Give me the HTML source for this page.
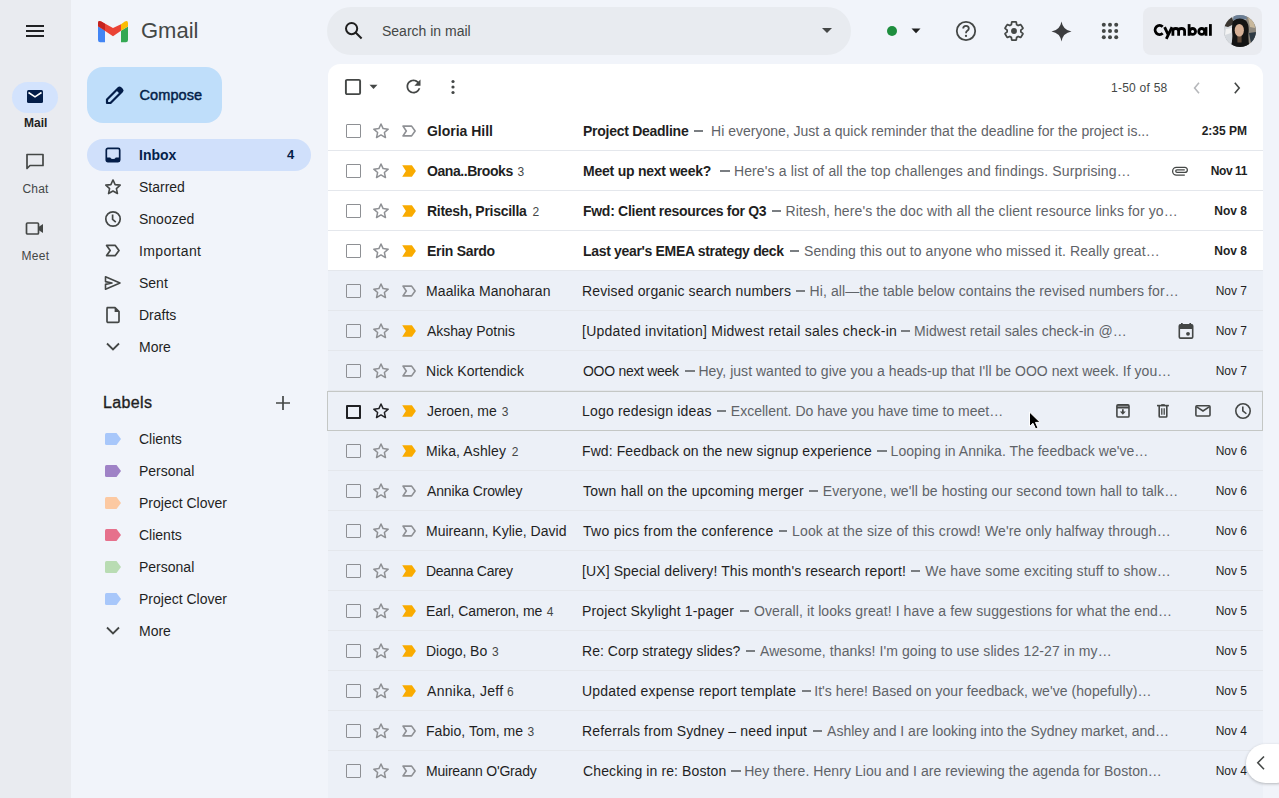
<!DOCTYPE html>
<html><head><meta charset="utf-8">
<style>
*{box-sizing:border-box;margin:0;padding:0}
html,body{width:1279px;height:798px;overflow:hidden;background:#f1f4fa;font-family:"Liberation Sans",sans-serif;color:#1f1f1f}
.abs{position:absolute}
#rail{left:0;top:0;width:71px;height:798px;background:#e9ebf0}
.ico{position:absolute;display:block}
.t{position:absolute;white-space:nowrap}
#search{left:327px;top:7px;width:524px;height:48px;border-radius:24px;background:#e8ebf0}
#panel{left:328px;top:64px;width:935px;height:734px;background:linear-gradient(#fff 0,#fff 207px,#ecf0f7 207px);border-radius:12px 12px 0 0}
.row{position:absolute;left:0;width:935px;height:40px;border-bottom:1px solid #e4e7ec}
.row.read{background:#ecf0f7}
.row .cb{position:absolute;left:18px;top:12.5px;width:14.6px;height:14.6px;border:1.8px solid #8e9094;border-radius:1px}
.row .star{position:absolute;left:44.2px;top:10.8px}
.row .imp{position:absolute;left:74px;top:14px}
.d{display:inline-block;width:23.4px;height:1.4px;background:linear-gradient(#5f6368,#5f6368) center/9.5px 100% no-repeat;vertical-align:4px}
.row .snd{position:absolute;top:12px;font-size:14px;line-height:16px;white-space:nowrap;color:#1f1f1f}
.row .sub{position:absolute;top:12px;font-size:14px;line-height:16px;white-space:nowrap;color:#1f1f1f}
.row .sub.b{font-weight:bold}
.row .snip{position:absolute;top:12px;font-size:14px;line-height:16px;white-space:nowrap;color:#5f6368}
.row .dash{position:absolute;top:19px;height:2px;background:#7a7e82}
.row .cnt{position:absolute;top:13px;font-size:12px;line-height:16px;color:#444746}
.row .dt{position:absolute;right:16px;top:12px;font-size:12px;line-height:16px;white-space:nowrap;color:#1f1f1f}
.unread .snd,.unread .dt{font-weight:bold;color:#1f1f1f}
.row.hov{border:1px solid #c4c7c5;z-index:2;left:-1px;width:936px;top:0}
.row.hov .cb{border:2px solid #202124;border-radius:1px}
.row.hov > .ico,.row.hov > .snd,.row.hov > .sub,.row.hov > .snip,.row.hov > .dash,.row.hov > .cnt,.row.hov > .star,.row.hov > .imp{margin-top:-1px}
.row .ico{position:absolute}
.nav{position:absolute;left:139px;font-size:14px;line-height:16px;color:#1f1f1f;white-space:nowrap}
.lab{position:absolute;left:139px;font-size:14px;line-height:16px;color:#1f1f1f;white-space:nowrap}
.tag{position:absolute;left:105px;width:16px;height:12px}
</style></head><body>
<div id="rail" class="abs"></div>
<!-- hamburger -->
<svg class="ico" style="left:26px;top:25px" width="18" height="12" viewBox="0 0 18 12"><rect x="0" y="0" width="18" height="2" fill="#202124"/><rect x="0" y="5" width="18" height="2" fill="#202124"/><rect x="0" y="10" width="18" height="2" fill="#202124"/></svg>
<!-- Mail pill -->
<div class="abs" style="left:12px;top:82px;width:46px;height:31px;border-radius:16px;background:#d3e3fd"></div>
<svg class="ico" style="left:26px;top:89px" width="18" height="15" viewBox="0 0 18 15"><rect x="1" y="1" width="16" height="13" rx="1.5" fill="#041e49"/><path d="M2.5 3.5 L9 7.8 L15.5 3.5" stroke="#fff" stroke-width="1.6" fill="none"/></svg>
<div class="t" style="left:24px;top:116px;font-size:12px;font-weight:bold;color:#1f1f1f">Mail</div>
<svg class="ico" style="left:25px;top:152px" width="20" height="20" viewBox="0 0 20 20"><path d="M2 2.5h16v11H5l-3 3z" stroke="#444746" stroke-width="1.7" fill="none" stroke-linejoin="round"/></svg>
<div class="t" style="left:22.5px;top:182px;font-size:12px;letter-spacing:0.2px;color:#444746">Chat</div>
<svg class="ico" style="left:25px;top:220px" width="20" height="18" viewBox="0 0 20 18"><rect x="1.5" y="3" width="12" height="11" rx="1" stroke="#444746" stroke-width="1.7" fill="none"/><path d="M13.5 7 L18 4 V13 L13.5 10z" fill="#444746"/></svg>
<div class="t" style="left:21.5px;top:248.5px;font-size:12px;letter-spacing:0.3px;color:#444746">Meet</div>

<!-- Gmail logo -->
<svg class="ico" style="left:98px;top:19.7px" width="30" height="23" viewBox="0 0 30 23">
<path d="M0 6.2 L7 10.3 V22.2 H2.2 Q0 22.2 0 20z" fill="#4285f4"/>
<path d="M23 10.7 L30 6.6 V20 Q30 22.2 27.8 22.2 H23z" fill="#34a853"/>
<path d="M23 4.2 L26.8 1.6 Q30 -0.2 30 3.5 V6.6 L23 10.7z" fill="#fbbc04"/>
<path d="M0 3.5 Q0 -0.2 3.2 1.6 L15 8.1 L23 4.2 V10.7 L15 16.2 L0 6.2z" fill="#ea4335"/>
<path d="M0 3.5 Q0 -0.2 3.2 1.6 L7 3.8 V10.3 L0 6.2z" fill="#c5221f"/>
</svg>
<div class="t" style="left:141px;top:18px;font-size:22px;line-height:26px;color:#444746">Gmail</div>

<!-- Compose -->
<div class="abs" style="left:87px;top:67px;width:135px;height:56px;border-radius:16px;background:#bfdefa"></div>
<svg class="ico" style="left:104px;top:85px" width="21" height="21" viewBox="0 0 21 21"><path d="M3 18 V14.5 L14.5 3 Q15.5 2 16.5 3 L18 4.5 Q19 5.5 18 6.5 L6.5 18z" stroke="#041e49" stroke-width="2.2" fill="none" stroke-linejoin="round"/><path d="M12.2 5.3 L14.5 3 Q15.5 2 16.5 3 L18 4.5 Q19 5.5 18 6.5 L15.7 8.8z" fill="#041e49"/></svg>
<div class="t" style="left:139.5px;top:87px;font-size:14.5px;line-height:16px;letter-spacing:0.1px;-webkit-text-stroke:0.45px #041e49;color:#041e49">Compose</div>

<!-- Nav -->
<div class="abs" style="left:87px;top:139px;width:224px;height:32px;border-radius:16px;background:#d0e0fb"></div>
<svg class="ico" style="left:105px;top:147px" width="16" height="16" viewBox="0 0 16 16"><rect x="1.3" y="1.3" width="13.4" height="13.4" rx="1.6" fill="none" stroke="#041e49" stroke-width="1.7"/><path d="M1.3 10.6 H5.2 Q6 12.1 8 12.1 Q10 12.1 10.8 10.6 H14.7 V13.2 Q14.7 14.7 13.2 14.7 H2.8 Q1.3 14.7 1.3 13.2z" fill="#041e49"/></svg>
<div class="nav" style="top:147px;font-weight:bold;color:#041e49">Inbox</div>
<div class="nav" style="top:147px;left:287px;font-weight:bold;color:#041e49;font-size:13px">4</div>

<svg class="ico" style="left:104px;top:178px" width="18" height="18" viewBox="0 0 24 24"><path d="M12 2.6l2.83 6.2 6.77.72-5.06 4.56 1.42 6.66L12 17.3l-5.96 3.44 1.42-6.66L2.4 9.52l6.77-.72z" fill="none" stroke="#444746" stroke-width="2.1" stroke-linejoin="round"/></svg>
<div class="nav" style="top:179px">Starred</div>
<svg class="ico" style="left:104px;top:210px" width="18" height="18" viewBox="0 0 18 18"><circle cx="9" cy="9" r="7.2" fill="none" stroke="#444746" stroke-width="1.7"/><path d="M8.6 4.6 V9.4 L11.8 12.2" fill="none" stroke="#444746" stroke-width="1.7"/></svg>
<div class="nav" style="top:211px">Snoozed</div>
<svg class="ico" style="left:105px;top:244px" width="16" height="13" viewBox="0 0 16 13"><path d="M1.6 1.4H10.3L14 6.5 10.3 11.6H1.6L5.2 6.5z" fill="none" stroke="#444746" stroke-width="1.7" stroke-linejoin="round"/></svg>
<div class="nav" style="top:243px;letter-spacing:0.35px">Important</div>
<svg class="ico" style="left:104px;top:275px" width="18" height="16" viewBox="0 0 18 16"><path d="M1.5 1.8 L16 8 L1.5 14.2 L1.5 9.4 L8 8 L1.5 6.6z" fill="none" stroke="#444746" stroke-width="1.6" stroke-linejoin="round"/></svg>
<div class="nav" style="top:275px">Sent</div>
<svg class="ico" style="left:105px;top:306px" width="16" height="18" viewBox="0 0 16 18"><path d="M2.2 1.6 H10 L14 5.6 V15.2 Q14 16.4 12.8 16.4 H3.2 Q2 16.4 2 15.2 V2.8 Q2 1.6 3.2 1.6z" fill="none" stroke="#444746" stroke-width="1.7" stroke-linejoin="round"/><path d="M9.6 1.6 L14 6 H9.6z" fill="#444746"/></svg>
<div class="nav" style="top:307px">Drafts</div>
<svg class="ico" style="left:105px;top:341px" width="16" height="12" viewBox="0 0 16 12"><path d="M2 2.5 L8 8.5 L14 2.5" fill="none" stroke="#444746" stroke-width="1.8"/></svg>
<div class="nav" style="top:339px">More</div>

<div class="t" style="left:103px;top:394px;font-size:16px;line-height:18px;letter-spacing:0.35px;-webkit-text-stroke:0.35px #1f1f1f;color:#1f1f1f">Labels</div>
<svg class="ico" style="left:276px;top:396px" width="14" height="14" viewBox="0 0 14 14"><path d="M7 0 V14 M0 7 H14" stroke="#444746" stroke-width="1.7"/></svg>
<svg class="tag" style="top:433px" viewBox="0 0 16 12"><path d="M1.5 0H11.5L16 6 11.5 12H1.5Q0 12 0 10.5V1.5Q0 0 1.5 0z" fill="#a8c7fa"/></svg>
<div class="lab" style="top:431px">Clients</div>
<svg class="tag" style="top:465px" viewBox="0 0 16 12"><path d="M1.5 0H11.5L16 6 11.5 12H1.5Q0 12 0 10.5V1.5Q0 0 1.5 0z" fill="#9f82c6"/></svg>
<div class="lab" style="top:463px">Personal</div>
<svg class="tag" style="top:497px" viewBox="0 0 16 12"><path d="M1.5 0H11.5L16 6 11.5 12H1.5Q0 12 0 10.5V1.5Q0 0 1.5 0z" fill="#fcc9a2"/></svg>
<div class="lab" style="top:495px">Project Clover</div>
<svg class="tag" style="top:529px" viewBox="0 0 16 12"><path d="M1.5 0H11.5L16 6 11.5 12H1.5Q0 12 0 10.5V1.5Q0 0 1.5 0z" fill="#e6718c"/></svg>
<div class="lab" style="top:527px">Clients</div>
<svg class="tag" style="top:561px" viewBox="0 0 16 12"><path d="M1.5 0H11.5L16 6 11.5 12H1.5Q0 12 0 10.5V1.5Q0 0 1.5 0z" fill="#b9dcb3"/></svg>
<div class="lab" style="top:559px">Personal</div>
<svg class="tag" style="top:593px" viewBox="0 0 16 12"><path d="M1.5 0H11.5L16 6 11.5 12H1.5Q0 12 0 10.5V1.5Q0 0 1.5 0z" fill="#a8c7fa"/></svg>
<div class="lab" style="top:591px">Project Clover</div>
<svg class="ico" style="left:105px;top:625px" width="16" height="12" viewBox="0 0 16 12"><path d="M2 2.5 L8 8.5 L14 2.5" fill="none" stroke="#444746" stroke-width="1.8"/></svg>
<div class="lab" style="top:623px">More</div>

<!-- search -->
<div id="search" class="abs"></div>
<svg class="ico" style="left:343px;top:20px" width="22" height="22" viewBox="0 0 22 22"><circle cx="8.6" cy="8.6" r="5.6" fill="none" stroke="#1f1f1f" stroke-width="2"/><path d="M12.6 12.6 L18.6 18.6" stroke="#1f1f1f" stroke-width="2.1"/></svg>
<div class="t" style="left:382px;top:23px;font-size:14px;line-height:16px;color:#444746">Search in mail</div>
<svg class="ico" style="left:821px;top:27px" width="12" height="7" viewBox="0 0 12 7"><path d="M1 1 H11 L6 6z" fill="#444746"/></svg>

<!-- header right -->
<div class="abs" style="left:887px;top:26px;width:10px;height:10px;border-radius:5px;background:#1e8e3e"></div>
<svg class="ico" style="left:911px;top:28px" width="10" height="6" viewBox="0 0 10 6"><path d="M0.5 0.5 H9.5 L5 5.2z" fill="#1f1f1f"/></svg>
<svg class="ico" style="left:955px;top:20px" width="22" height="22" viewBox="0 0 22 22"><circle cx="11" cy="11" r="9.2" fill="none" stroke="#444746" stroke-width="1.8"/><path d="M8.2 8.6 Q8.2 5.8 11 5.8 Q13.8 5.8 13.8 8.4 Q13.8 9.8 12.3 10.7 Q11 11.5 11 13.2" fill="none" stroke="#444746" stroke-width="1.8"/><circle cx="11" cy="15.9" r="1.15" fill="#444746"/></svg>
<svg class="ico" style="left:1003px;top:20px" width="22" height="22" viewBox="0 0 24 24"><path d="M19.43 12.98c.04-.32.07-.64.07-.98s-.03-.66-.07-.98l2.11-1.65c.19-.15.24-.42.12-.64l-2-3.46c-.12-.22-.39-.3-.61-.22l-2.49 1c-.52-.4-1.08-.73-1.69-.98l-.38-2.65C14.46 2.18 14.25 2 14 2h-4c-.25 0-.46.18-.49.42l-.38 2.65c-.61.25-1.17.59-1.69.98l-2.49-1c-.23-.09-.49 0-.61.22l-2 3.46c-.13.22-.07.49.12.64l2.11 1.65c-.04.32-.07.65-.07.98s.03.66.07.98l-2.11 1.65c-.19.15-.24.42-.12.64l2 3.46c.12.22.39.3.61.22l2.49-1c.52.4 1.08.73 1.69.98l.38 2.65c.03.24.24.42.49.42h4c.25 0 .46-.18.49-.42l.38-2.65c.61-.25 1.17-.59 1.69-.98l2.49 1c.23.09.49 0 .61-.22l2-3.46c.12-.22.07-.49-.12-.64l-2.11-1.65z" fill="none" stroke="#444746" stroke-width="1.9" stroke-linejoin="round"/><circle cx="12" cy="12" r="3.2" fill="#444746"/></svg>
<svg class="ico" style="left:1051px;top:21px" width="21" height="21" viewBox="0 0 21 21"><path d="M10.5 0.5 Q11.9 9.1 20.5 10.5 Q11.9 11.9 10.5 20.5 Q9.1 11.9 0.5 10.5 Q9.1 9.1 10.5 0.5z" fill="#3c3d3f"/></svg>
<svg class="ico" style="left:1101px;top:22px" width="18" height="18" viewBox="0 0 18 18" fill="#444746"><circle cx="2.8" cy="2.8" r="2"/><circle cx="9" cy="2.8" r="2"/><circle cx="15.2" cy="2.8" r="2"/><circle cx="2.8" cy="9" r="2"/><circle cx="9" cy="9" r="2"/><circle cx="15.2" cy="9" r="2"/><circle cx="2.8" cy="15.2" r="2"/><circle cx="9" cy="15.2" r="2"/><circle cx="15.2" cy="15.2" r="2"/></svg>
<div class="abs" style="left:1143px;top:7px;width:119px;height:48px;border-radius:8px;background:#e9ebf0"></div>
<svg class="ico" style="left:1150px;top:18px" width="65" height="24" viewBox="0 0 65 24"><g fill="none" stroke="#000" stroke-width="2.8">
<path d="M12.7 8.7 A4.5 4.5 0 1 0 12.7 15.3" stroke-width="2.9"/>
<path d="M14.6 9.1 L18.4 17.2 M22 9.1 L16.3 20.8"/>
<path d="M22.9 17.8 V13 Q22.9 10.5 25.75 10.5 Q28.6 10.5 28.6 13 V17.8 M28.6 13 Q28.6 10.5 31.6 10.5 Q34.6 10.5 34.6 13 V17.8"/>
<path d="M39.1 6.1 V17.8"/><circle cx="42.6" cy="13.45" r="2.95"/>
<circle cx="51.7" cy="13.45" r="2.95"/><path d="M56 9.1 V17.8"/>
<path d="M60.4 6.1 V17.8"/>
</g></svg>
<svg class="ico" style="left:1223.5px;top:15px" width="32" height="32" viewBox="0 0 32 32"><defs><clipPath id="av"><circle cx="16" cy="16" r="16"/></clipPath></defs><g clip-path="url(#av)">
<rect width="32" height="32" fill="#a9abad"/>
<rect x="0" y="0" width="9" height="32" fill="#d5d9de"/>
<path d="M0 4 L8 2 L10 9 L4 12 L0 11z" fill="#3a3530"/>
<path d="M2 14 L8 13 L7 18 L1 20z" fill="#f2f2f2"/>
<rect x="22" y="0" width="10" height="32" fill="#8e887e"/>
<path d="M24 2 L30 6 L31 13 L26 12z" fill="#c8b89c"/>
<path d="M25 18 L32 17 L32 26 L27 28z" fill="#2e3a44"/>
<path d="M10 0 L22 0 L23 4 L9 5z" fill="#6b7e95"/>
<path d="M9 6 Q15.5 1.5 22 5.5 Q25.5 10 24.5 18 Q24 26 26 34 L6 34 Q9 26 8.2 18 Q7.5 10 9 6z" fill="#141414"/>
<rect x="13.4" y="20.5" width="4.2" height="7" fill="#5e4838"/>
<ellipse cx="15.3" cy="15.2" rx="4.6" ry="6.3" fill="#d6b096"/>
<path d="M10.6 10.5 Q15 6 20.2 10 L20.4 7.5 Q15 3.5 10.2 8z" fill="#141414"/>
</g></svg>

<!-- panel -->
<div id="panel" class="abs">
<svg class="ico" style="left:16px;top:14px" width="18" height="18" viewBox="0 0 18 18"><rect x="1.9" y="1.9" width="14.2" height="14.2" rx="1.2" fill="none" stroke="#444746" stroke-width="1.9"/></svg>
<svg class="ico" style="left:41px;top:20px" width="9" height="6" viewBox="0 0 9 6"><path d="M0.5 0.8 H8.5 L4.5 4.9z" fill="#444746"/></svg>
<svg class="ico" style="left:74.5px;top:12.3px" width="21" height="21" viewBox="0 0 24 24"><path d="M17.65 6.35C16.2 4.9 14.21 4 12 4c-4.42 0-7.99 3.58-7.99 8s3.57 8 7.99 8c3.73 0 6.84-2.55 7.73-6h-2.08c-.82 2.33-3.04 4-5.65 4-3.31 0-6-2.69-6-6s2.69-6 6-6c1.66 0 3.14.69 4.22 1.78L13 11h7V4l-2.35 2.35z" fill="#444746"/></svg>
<svg class="ico" style="left:122px;top:15px" width="6" height="16" viewBox="0 0 6 16" fill="#444746"><circle cx="3" cy="2.5" r="1.6"/><circle cx="3" cy="8" r="1.6"/><circle cx="3" cy="13.5" r="1.6"/></svg>
<div class="t" style="left:783px;top:16.5px;font-size:12px;line-height:14px;letter-spacing:0.25px;color:#444746">1-50 of 58</div>
<svg class="ico" style="left:864px;top:17px" width="10" height="14" viewBox="0 0 10 14"><path d="M7 1.8 L2.6 7 L7 12.2" fill="none" stroke="#b6b8bb" stroke-width="1.6"/></svg>
<svg class="ico" style="left:905px;top:17px" width="10" height="14" viewBox="0 0 10 14"><path d="M1.8 1.8 L6.2 7 L1.8 12.2" fill="none" stroke="#444746" stroke-width="1.6"/></svg>
<div class="row unread" style="top:47px"><div class="cb"></div><svg class="star" width="18" height="18" viewBox="0 0 24 24"><path d="M12 2.6l2.83 6.2 6.77.72-5.06 4.56 1.42 6.66L12 17.3l-5.96 3.44 1.42-6.66L2.4 9.52l6.77-.72z" fill="none" stroke="#8e9094" stroke-width="2" stroke-linejoin="round"/></svg><svg class="imp" width="14" height="12" viewBox="0 0 14 12"><path d="M1 1.1H9.6L13.1 6 9.6 10.9H1L4.3 6z" fill="none" stroke="#8e9094" stroke-width="1.6" stroke-linejoin="round"/></svg><div class="snd" style="left:99.00px;letter-spacing:-0.023px">Gloria Hill</div><div class="sub b" style="left:255.00px;letter-spacing:-0.268px">Project Deadline</div><div class="dash" style="left:365.90px;width:9.40px"></div><div class="snip" style="left:383.10px;letter-spacing:-0.002px">Hi everyone, Just a quick reminder that the deadline for the project is...</div><div class="dt">2:35 PM</div></div>
<div class="row unread" style="top:87px"><div class="cb"></div><svg class="star" width="18" height="18" viewBox="0 0 24 24"><path d="M12 2.6l2.83 6.2 6.77.72-5.06 4.56 1.42 6.66L12 17.3l-5.96 3.44 1.42-6.66L2.4 9.52l6.77-.72z" fill="none" stroke="#8e9094" stroke-width="2" stroke-linejoin="round"/></svg><svg class="imp" width="14" height="12" viewBox="0 0 14 12"><path d="M0.2 0.3H9.9L13.9 6 9.9 11.7H0.2L3.9 6z" fill="#f9ab00"/></svg><div class="snd" style="left:99.00px;letter-spacing:-0.440px">Oana..Brooks</div><div class="cnt" style="left:189.40px">3</div><div class="sub b" style="left:255.00px;letter-spacing:-0.230px">Meet up next week?</div><div class="dash" style="left:392.20px;width:9.40px"></div><div class="snip" style="left:405.90px;letter-spacing:0.139px">Here's a list of all the top challenges and findings. Surprising…</div><div class="dt" style="letter-spacing:-0.4px">Nov 11</div><svg class="ico" style="left:843px;top:15px" width="18" height="11" viewBox="0 0 18 11"><path d="M13.8 9.1 H5.45 A3.825 3.825 0 0 1 5.45 1.45 H13.9 A2.45 2.45 0 0 1 13.9 6.35 H6 A1.25 1.25 0 0 1 6 3.85 H13.8" fill="none" stroke="#444746" stroke-width="1.3"/></svg></div>
<div class="row unread" style="top:127px"><div class="cb"></div><svg class="star" width="18" height="18" viewBox="0 0 24 24"><path d="M12 2.6l2.83 6.2 6.77.72-5.06 4.56 1.42 6.66L12 17.3l-5.96 3.44 1.42-6.66L2.4 9.52l6.77-.72z" fill="none" stroke="#8e9094" stroke-width="2" stroke-linejoin="round"/></svg><svg class="imp" width="14" height="12" viewBox="0 0 14 12"><path d="M0.2 0.3H9.9L13.9 6 9.9 11.7H0.2L3.9 6z" fill="#f9ab00"/></svg><div class="snd" style="left:99.00px;letter-spacing:-0.274px">Ritesh, Priscilla</div><div class="cnt" style="left:204.40px">2</div><div class="sub b" style="left:255.00px;letter-spacing:-0.288px">Fwd: Client resources for Q3</div><div class="dash" style="left:443.60px;width:9.20px"></div><div class="snip" style="left:457.50px;letter-spacing:0.117px">Ritesh, here's the doc with all the client resource links for yo…</div><div class="dt">Nov 8</div></div>
<div class="row unread" style="top:167px"><div class="cb"></div><svg class="star" width="18" height="18" viewBox="0 0 24 24"><path d="M12 2.6l2.83 6.2 6.77.72-5.06 4.56 1.42 6.66L12 17.3l-5.96 3.44 1.42-6.66L2.4 9.52l6.77-.72z" fill="none" stroke="#8e9094" stroke-width="2" stroke-linejoin="round"/></svg><svg class="imp" width="14" height="12" viewBox="0 0 14 12"><path d="M0.2 0.3H9.9L13.9 6 9.9 11.7H0.2L3.9 6z" fill="#f9ab00"/></svg><div class="snd" style="left:99.00px;letter-spacing:-0.293px">Erin Sardo</div><div class="sub b" style="left:255.00px;letter-spacing:-0.328px">Last year's EMEA strategy deck</div><div class="dash" style="left:461.60px;width:9.40px"></div><div class="snip" style="left:476.00px;letter-spacing:0.088px">Sending this out to anyone who missed it. Really great…</div><div class="dt">Nov 8</div></div>
<div class="row read" style="top:207px"><div class="cb"></div><svg class="star" width="18" height="18" viewBox="0 0 24 24"><path d="M12 2.6l2.83 6.2 6.77.72-5.06 4.56 1.42 6.66L12 17.3l-5.96 3.44 1.42-6.66L2.4 9.52l6.77-.72z" fill="none" stroke="#8e9094" stroke-width="2" stroke-linejoin="round"/></svg><svg class="imp" width="14" height="12" viewBox="0 0 14 12"><path d="M1 1.1H9.6L13.1 6 9.6 10.9H1L4.3 6z" fill="none" stroke="#8e9094" stroke-width="1.6" stroke-linejoin="round"/></svg><div class="snd" style="left:98.00px;letter-spacing:0.096px">Maalika Manoharan</div><div class="sub" style="left:254.00px;letter-spacing:0.146px">Revised organic search numbers</div><div class="dash" style="left:468.20px;width:8.70px"></div><div class="snip" style="left:481.60px;letter-spacing:0.088px">Hi, all—the table below contains the revised numbers for…</div><div class="dt">Nov 7</div></div>
<div class="row read" style="top:247px"><div class="cb"></div><svg class="star" width="18" height="18" viewBox="0 0 24 24"><path d="M12 2.6l2.83 6.2 6.77.72-5.06 4.56 1.42 6.66L12 17.3l-5.96 3.44 1.42-6.66L2.4 9.52l6.77-.72z" fill="none" stroke="#8e9094" stroke-width="2" stroke-linejoin="round"/></svg><svg class="imp" width="14" height="12" viewBox="0 0 14 12"><path d="M0.2 0.3H9.9L13.9 6 9.9 11.7H0.2L3.9 6z" fill="#f9ab00"/></svg><div class="snd" style="left:99.00px;letter-spacing:-0.067px">Akshay Potnis</div><div class="sub" style="left:254.00px;letter-spacing:0.263px">[Updated invitation] Midwest retail sales check-in</div><div class="dash" style="left:572.80px;width:9.20px"></div><div class="snip" style="left:586.00px;letter-spacing:0.078px">Midwest retail sales check-in @…</div><div class="dt">Nov 7</div><svg class="ico" style="left:850px;top:12px" width="16" height="17" viewBox="0 0 16 17"><path d="M1.3 3 Q1.3 1.8 2.5 1.8 H13.5 Q14.7 1.8 14.7 3 V13.9 Q14.7 15.1 13.5 15.1 H2.5 Q1.3 15.1 1.3 13.9z" fill="none" stroke="#444746" stroke-width="1.6"/><rect x="1.3" y="1.8" width="13.4" height="4.2" fill="#444746"/><rect x="3" y="0" width="1.7" height="2.5" fill="#444746"/><rect x="11.4" y="0" width="1.7" height="2.5" fill="#444746"/><circle cx="10" cy="10.8" r="1.9" fill="#444746"/></svg></div>
<div class="row read" style="top:287px"><div class="cb"></div><svg class="star" width="18" height="18" viewBox="0 0 24 24"><path d="M12 2.6l2.83 6.2 6.77.72-5.06 4.56 1.42 6.66L12 17.3l-5.96 3.44 1.42-6.66L2.4 9.52l6.77-.72z" fill="none" stroke="#8e9094" stroke-width="2" stroke-linejoin="round"/></svg><svg class="imp" width="14" height="12" viewBox="0 0 14 12"><path d="M1 1.1H9.6L13.1 6 9.6 10.9H1L4.3 6z" fill="none" stroke="#8e9094" stroke-width="1.6" stroke-linejoin="round"/></svg><div class="snd" style="left:98.00px;letter-spacing:0.046px">Nick Kortendick</div><div class="sub" style="left:255.00px;letter-spacing:-0.291px">OOO next week</div><div class="dash" style="left:357.20px;width:9.40px"></div><div class="snip" style="left:370.40px;letter-spacing:0.026px">Hey, just wanted to give you a heads-up that I'll be OOO next week. If you…</div><div class="dt">Nov 7</div></div>
<div class="row read hov" style="top:327px"><div class="cb"></div><svg class="star" width="18" height="18" viewBox="0 0 24 24"><path d="M12 2.6l2.83 6.2 6.77.72-5.06 4.56 1.42 6.66L12 17.3l-5.96 3.44 1.42-6.66L2.4 9.52l6.77-.72z" fill="none" stroke="#202124" stroke-width="2" stroke-linejoin="round"/></svg><svg class="imp" width="14" height="12" viewBox="0 0 14 12"><path d="M0.2 0.3H9.9L13.9 6 9.9 11.7H0.2L3.9 6z" fill="#f9ab00"/></svg><div class="snd" style="left:99.00px;letter-spacing:-0.028px">Jeroen, me</div><div class="cnt" style="left:173.80px">3</div><div class="sub" style="left:254.00px;letter-spacing:0.184px">Logo redesign ideas</div><div class="dash" style="left:388.90px;width:9.20px"></div><div class="snip" style="left:402.80px;letter-spacing:0.001px">Excellent. Do have you have time to meet…</div></div>
<div class="row read" style="top:367px"><div class="cb"></div><svg class="star" width="18" height="18" viewBox="0 0 24 24"><path d="M12 2.6l2.83 6.2 6.77.72-5.06 4.56 1.42 6.66L12 17.3l-5.96 3.44 1.42-6.66L2.4 9.52l6.77-.72z" fill="none" stroke="#8e9094" stroke-width="2" stroke-linejoin="round"/></svg><svg class="imp" width="14" height="12" viewBox="0 0 14 12"><path d="M0.2 0.3H9.9L13.9 6 9.9 11.7H0.2L3.9 6z" fill="#f9ab00"/></svg><div class="snd" style="left:98.00px;letter-spacing:0.131px">Mika, Ashley</div><div class="cnt" style="left:183.70px">2</div><div class="sub" style="left:254.00px;letter-spacing:0.099px">Fwd: Feedback on the new signup experience</div><div class="dash" style="left:549.20px;width:9.40px"></div><div class="snip" style="left:562.60px;letter-spacing:0.044px">Looping in Annika. The feedback we've…</div><div class="dt">Nov 6</div></div>
<div class="row read" style="top:407px"><div class="cb"></div><svg class="star" width="18" height="18" viewBox="0 0 24 24"><path d="M12 2.6l2.83 6.2 6.77.72-5.06 4.56 1.42 6.66L12 17.3l-5.96 3.44 1.42-6.66L2.4 9.52l6.77-.72z" fill="none" stroke="#8e9094" stroke-width="2" stroke-linejoin="round"/></svg><svg class="imp" width="14" height="12" viewBox="0 0 14 12"><path d="M1 1.1H9.6L13.1 6 9.6 10.9H1L4.3 6z" fill="none" stroke="#8e9094" stroke-width="1.6" stroke-linejoin="round"/></svg><div class="snd" style="left:99.00px;letter-spacing:-0.143px">Annika Crowley</div><div class="sub" style="left:255.00px;letter-spacing:0.215px">Town hall on the upcoming merger</div><div class="dash" style="left:481.30px;width:8.80px"></div><div class="snip" style="left:494.70px;letter-spacing:0.104px">Everyone, we'll be hosting our second town hall to talk…</div><div class="dt">Nov 6</div></div>
<div class="row read" style="top:447px"><div class="cb"></div><svg class="star" width="18" height="18" viewBox="0 0 24 24"><path d="M12 2.6l2.83 6.2 6.77.72-5.06 4.56 1.42 6.66L12 17.3l-5.96 3.44 1.42-6.66L2.4 9.52l6.77-.72z" fill="none" stroke="#8e9094" stroke-width="2" stroke-linejoin="round"/></svg><svg class="imp" width="14" height="12" viewBox="0 0 14 12"><path d="M1 1.1H9.6L13.1 6 9.6 10.9H1L4.3 6z" fill="none" stroke="#8e9094" stroke-width="1.6" stroke-linejoin="round"/></svg><div class="snd" style="left:98.00px;letter-spacing:0.020px">Muireann, Kylie, David</div><div class="sub" style="left:255.00px;letter-spacing:0.271px">Two pics from the conference</div><div class="dash" style="left:450.70px;width:8.70px"></div><div class="snip" style="left:464.10px;letter-spacing:0.140px">Look at the size of this crowd! We're only halfway through…</div><div class="dt">Nov 6</div></div>
<div class="row read" style="top:487px"><div class="cb"></div><svg class="star" width="18" height="18" viewBox="0 0 24 24"><path d="M12 2.6l2.83 6.2 6.77.72-5.06 4.56 1.42 6.66L12 17.3l-5.96 3.44 1.42-6.66L2.4 9.52l6.77-.72z" fill="none" stroke="#8e9094" stroke-width="2" stroke-linejoin="round"/></svg><svg class="imp" width="14" height="12" viewBox="0 0 14 12"><path d="M0.2 0.3H9.9L13.9 6 9.9 11.7H0.2L3.9 6z" fill="#f9ab00"/></svg><div class="snd" style="left:98.00px;letter-spacing:-0.298px">Deanna Carey</div><div class="sub" style="left:254.00px;letter-spacing:0.108px">[UX] Special delivery! This month's research report!</div><div class="dash" style="left:582.70px;width:9.30px"></div><div class="snip" style="left:597.30px;letter-spacing:0.134px">We have some exciting stuff to show…</div><div class="dt">Nov 5</div></div>
<div class="row read" style="top:527px"><div class="cb"></div><svg class="star" width="18" height="18" viewBox="0 0 24 24"><path d="M12 2.6l2.83 6.2 6.77.72-5.06 4.56 1.42 6.66L12 17.3l-5.96 3.44 1.42-6.66L2.4 9.52l6.77-.72z" fill="none" stroke="#8e9094" stroke-width="2" stroke-linejoin="round"/></svg><svg class="imp" width="14" height="12" viewBox="0 0 14 12"><path d="M0.2 0.3H9.9L13.9 6 9.9 11.7H0.2L3.9 6z" fill="#f9ab00"/></svg><div class="snd" style="left:98.00px;letter-spacing:-0.069px">Earl, Cameron, me</div><div class="cnt" style="left:218.70px">4</div><div class="sub" style="left:254.00px;letter-spacing:0.145px">Project Skylight 1-pager</div><div class="dash" style="left:411.80px;width:9.50px"></div><div class="snip" style="left:426.00px;letter-spacing:0.095px">Overall, it looks great! I have a few suggestions for what the end…</div><div class="dt">Nov 5</div></div>
<div class="row read" style="top:567px"><div class="cb"></div><svg class="star" width="18" height="18" viewBox="0 0 24 24"><path d="M12 2.6l2.83 6.2 6.77.72-5.06 4.56 1.42 6.66L12 17.3l-5.96 3.44 1.42-6.66L2.4 9.52l6.77-.72z" fill="none" stroke="#8e9094" stroke-width="2" stroke-linejoin="round"/></svg><svg class="imp" width="14" height="12" viewBox="0 0 14 12"><path d="M0.2 0.3H9.9L13.9 6 9.9 11.7H0.2L3.9 6z" fill="#f9ab00"/></svg><div class="snd" style="left:98.00px;letter-spacing:-0.037px">Diogo, Bo</div><div class="cnt" style="left:163.90px">3</div><div class="sub" style="left:254.00px;letter-spacing:0.046px">Re: Corp strategy slides?</div><div class="dash" style="left:417.70px;width:9.50px"></div><div class="snip" style="left:432.00px;letter-spacing:0.088px">Awesome, thanks! I'm going to use slides 12-27 in my…</div><div class="dt">Nov 5</div></div>
<div class="row read" style="top:607px"><div class="cb"></div><svg class="star" width="18" height="18" viewBox="0 0 24 24"><path d="M12 2.6l2.83 6.2 6.77.72-5.06 4.56 1.42 6.66L12 17.3l-5.96 3.44 1.42-6.66L2.4 9.52l6.77-.72z" fill="none" stroke="#8e9094" stroke-width="2" stroke-linejoin="round"/></svg><svg class="imp" width="14" height="12" viewBox="0 0 14 12"><path d="M0.2 0.3H9.9L13.9 6 9.9 11.7H0.2L3.9 6z" fill="#f9ab00"/></svg><div class="snd" style="left:99.00px;letter-spacing:0.299px">Annika, Jeff</div><div class="cnt" style="left:178.90px">6</div><div class="sub" style="left:254.00px;letter-spacing:0.206px">Updated expense report template</div><div class="dash" style="left:473.70px;width:9.50px"></div><div class="snip" style="left:486.20px;letter-spacing:0.053px">It's here! Based on your feedback, we've (hopefully)…</div><div class="dt">Nov 5</div></div>
<div class="row read" style="top:647px"><div class="cb"></div><svg class="star" width="18" height="18" viewBox="0 0 24 24"><path d="M12 2.6l2.83 6.2 6.77.72-5.06 4.56 1.42 6.66L12 17.3l-5.96 3.44 1.42-6.66L2.4 9.52l6.77-.72z" fill="none" stroke="#8e9094" stroke-width="2" stroke-linejoin="round"/></svg><svg class="imp" width="14" height="12" viewBox="0 0 14 12"><path d="M1 1.1H9.6L13.1 6 9.6 10.9H1L4.3 6z" fill="none" stroke="#8e9094" stroke-width="1.6" stroke-linejoin="round"/></svg><div class="snd" style="left:98.00px;letter-spacing:0.070px">Fabio, Tom, me</div><div class="cnt" style="left:199.60px">3</div><div class="sub" style="left:254.00px;letter-spacing:0.144px">Referrals from Sydney – need input</div><div class="dash" style="left:484.90px;width:9.00px"></div><div class="snip" style="left:499.10px;letter-spacing:0.007px">Ashley and I are looking into the Sydney market, and…</div><div class="dt">Nov 4</div></div>
<div class="row read" style="top:687px;border-bottom:none"><div class="cb"></div><svg class="star" width="18" height="18" viewBox="0 0 24 24"><path d="M12 2.6l2.83 6.2 6.77.72-5.06 4.56 1.42 6.66L12 17.3l-5.96 3.44 1.42-6.66L2.4 9.52l6.77-.72z" fill="none" stroke="#8e9094" stroke-width="2" stroke-linejoin="round"/></svg><svg class="imp" width="14" height="12" viewBox="0 0 14 12"><path d="M1 1.1H9.6L13.1 6 9.6 10.9H1L4.3 6z" fill="none" stroke="#8e9094" stroke-width="1.6" stroke-linejoin="round"/></svg><div class="snd" style="left:98.00px;letter-spacing:-0.216px">Muireann O'Grady</div><div class="sub" style="left:255.00px;letter-spacing:0.116px">Checking in re: Boston</div><div class="dash" style="left:403.00px;width:9.50px"></div><div class="snip" style="left:416.20px;letter-spacing:0.058px">Hey there. Henry Liou and I are reviewing the agenda for Boston…</div><div class="dt">Nov 4</div></div></div>
<!-- collapse side panel -->
<div class="abs" style="left:1246px;top:744px;width:50px;height:39px;border-radius:20px;background:#fff;box-shadow:0 1px 3px rgba(0,0,0,.25)"></div>
<svg class="ico" style="left:1255px;top:755px" width="12" height="16" viewBox="0 0 12 16"><path d="M9 1.5 L2.8 7.8 L9 14.2" fill="none" stroke="#444746" stroke-width="1.6"/></svg>
<!-- hover row actions -->
<svg class="ico" style="left:1100px;top:395px;z-index:6" width="160" height="30" viewBox="0 0 160 30">
<g fill="none" stroke="#444746" stroke-width="1.6">
<rect x="16.9" y="9.9" width="12.1" height="3" fill="#8a8c8f" stroke="none"/>
<path d="M16.9 11 Q16.9 9.9 18 9.9 H27.9 Q29 9.9 29 11 V20.9 Q29 22 27.9 22 H18 Q16.9 22 16.9 20.9z M16.9 12.8 H29"/>
<path d="M22.85 14.2 V17.5" stroke-width="1.7"/>
<path d="M19.9 16.6 H25.8 L22.85 19.8z" fill="#444746" stroke="none"/>
<path d="M57 10.6 H68.9"/>
<path d="M61.2 9.8 H64.8" stroke-width="1.3"/>
<path d="M59.2 11 V21.2 Q59.2 22 60 22 H66 Q66.8 22 66.8 21.2 V11"/>
<path d="M61.8 13.2 V19.8 M64.2 13.2 V19.8" stroke-width="1.3"/>
<rect x="95.9" y="10.8" width="14.1" height="10.2" rx="1"/>
<path d="M96.3 11.6 L103 16 L109.6 11.6"/>
<circle cx="143" cy="16" r="7.2"/>
<path d="M142.8 11.4 V15.8 L146.4 18.75"/>
</g></svg>
<!-- cursor -->
<svg class="ico" style="left:1028px;top:411px;z-index:10" width="14" height="19" viewBox="0 0 14 19"><path d="M1.5 1 V15.5 L5 12.3 L7.6 18 L10 17 L7.5 11.4 H12.2z" fill="#000" stroke="#fff" stroke-width="1"/></svg>
</body></html>
